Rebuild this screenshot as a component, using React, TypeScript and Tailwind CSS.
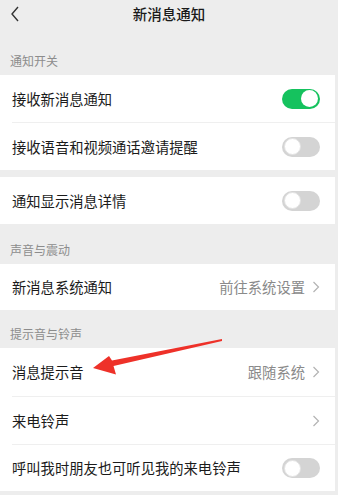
import React from "react";

function Toggle({ on }: { on?: boolean }) {
  return (
    <div
      className={
        "w-[38px] h-[20px] rounded-full p-[2px] flex items-center " +
        (on ? "bg-[#15c25e] justify-end" : "bg-[#d4d4d4] justify-start")
      }
    >
      <div
        className={
          "w-[17px] h-[17px] rounded-full bg-white " +
          (on ? "" : "border border-[#e3e3e3]")
        }
      />
    </div>
  );
}

function Chevron() {
  return (
    <svg width="8" height="12" viewBox="0 0 8 12" className="ml-[7px]">
      <path d="M1.5 1 L6.5 6 L1.5 11" fill="none" stroke="#b3b3b3" strokeWidth="1.2" />
    </svg>
  );
}

function Row({
  label,
  value,
  toggle,
  chevron,
  line,
  h = "h-[47px]",
}: {
  label: string;
  value?: string;
  toggle?: "on" | "off";
  chevron?: boolean;
  line?: boolean;
  h?: string;
}) {
  return (
    <div className="bg-white mr-[3px]">
      {line && <div className="ml-3 border-t border-[#efefef]" />}
      <div className={"flex items-center justify-between pl-3 pr-[15px] " + h}>
        <span className="text-[14.3px] text-[#1b1b1b]">{label}</span>
        <div className="flex items-center">
          {value && <span className="text-[14.3px] text-[#8a8a8a]">{value}</span>}
          {chevron && <Chevron />}
          {toggle && <Toggle on={toggle === "on"} />}
        </div>
      </div>
    </div>
  );
}

function Label({ text, h }: { text: string; h: string }) {
  return (
    <div className={"flex items-end pl-[10px] pb-[6px] " + h}>
      <span className="text-[12px] leading-4 text-[#8c8c8c]">{text}</span>
    </div>
  );
}

export default function App() {
  return (
    <div
      className="relative w-[338px] h-[495px] bg-[#ededed] overflow-hidden"
      style={{ fontFamily: '"Noto Sans CJK SC", "Noto Sans", sans-serif' }}
    >
      <div className="relative h-[30px] flex items-center justify-center">
        <svg width="10" height="16" viewBox="0 0 10 16" className="absolute left-[10px] top-[6px]">
          <path d="M8 1 L2 8 L8 15" fill="none" stroke="#333" strokeWidth="1.4" />
        </svg>
        <span className="text-[14.5px] font-medium text-[#1a1a1a] -mt-[2px]">新消息通知</span>
      </div>

      <Label text="通知开关" h="h-[45px]" />
      <Row label="接收新消息通知" toggle="on" />
      <Row label="接收语音和视频通话邀请提醒" toggle="off" line />
      <div className="h-[7px]" />
      <Row label="通知显示消息详情" toggle="off" />

      <Label text="声音与震动" h="h-[40px]" />
      <Row label="新消息系统通知" value="前往系统设置" chevron h="h-[46px]" />

      <Label text="提示音与铃声" h="h-[38px]" />
      <Row label="消息提示音" value="跟随系统" chevron h="h-[48px]" />
      <Row label="来电铃声" chevron line h="h-[47px]" />
      <Row label="呼叫我时朋友也可听见我的来电铃声" toggle="off" line h="h-[46px]" />

      <svg
        className="absolute left-0 top-0 pointer-events-none"
        width="338"
        height="495"
        viewBox="0 0 338 495"
      >
        <polygon
          points="222,339 112,360.5 109,356 93,368 116,374.5 113.5,366 222,341"
          fill="#ee3129"
        />
      </svg>
    </div>
  );
}
